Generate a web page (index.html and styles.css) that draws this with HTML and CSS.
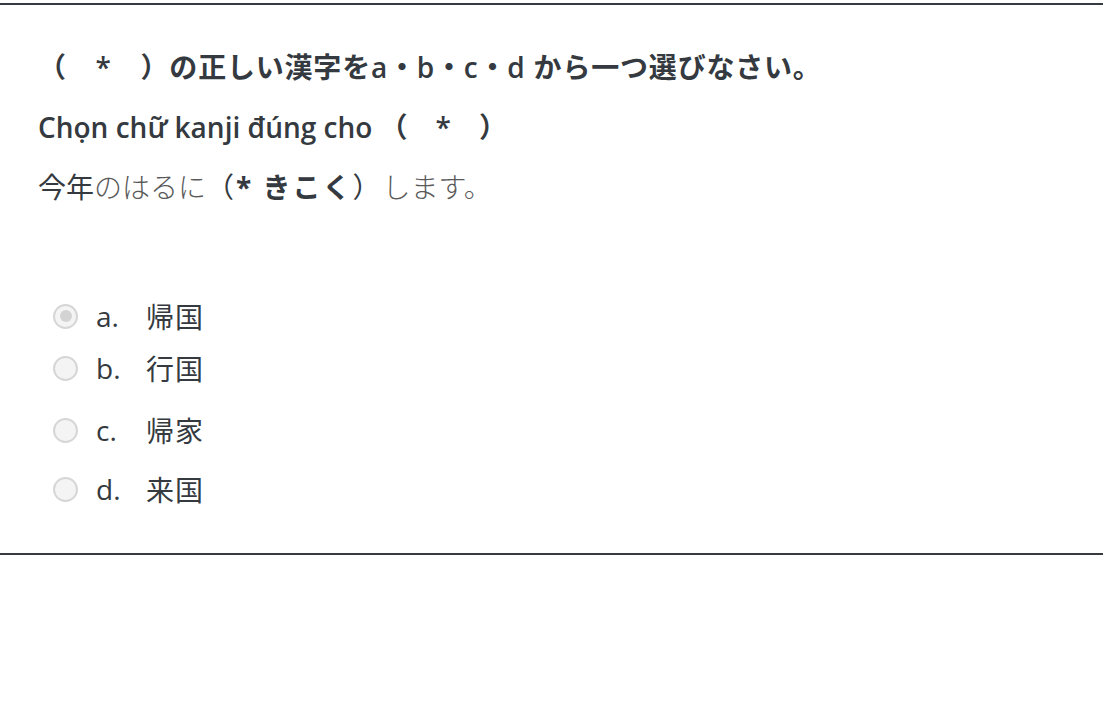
FILE: index.html
```html
<!DOCTYPE html>
<html lang="ja">
<head>
<meta charset="utf-8">
<link rel="stylesheet" href="styles.css">
</head>
<body>
<div class="question">
  <p class="title">（　*　）の正しい漢字をa・b・c・d から一つ選びなさい。</p>
  <p class="subtitle">Chọn chữ kanji đúng cho （　*　）</p>
  <p class="sentence"><span class="kanji">今年</span><span class="light">のはるに</span><span class="paren">（<b>* きこく</b>）</span><span class="light">します。</span></p>
  <ul class="answers">
    <li class="answer a1"><span class="radio checked"></span><span class="letter">a.</span><span class="ans">帰国</span></li>
    <li class="answer a2"><span class="radio"></span><span class="letter">b.</span><span class="ans">行国</span></li>
    <li class="answer a3"><span class="radio"></span><span class="letter">c.</span><span class="ans">帰家</span></li>
    <li class="answer a4"><span class="radio"></span><span class="letter">d.</span><span class="ans">来国</span></li>
  </ul>
</div>
</body>
</html>
```
FILE: styles.css
```css
html, body {
  margin: 0;
  padding: 0;
  background: #fff;
}
body {
  font-family: "Open Sans", "Noto Sans CJK JP", sans-serif;
  color: #343a40;
  padding-top: 3px;
}
.question {
  border-top: 2px solid #343a40;
  border-bottom: 2px solid #343a40;
  padding: 36px 38px 30px;
  height: 552px;
  box-sizing: border-box;
}
p {
  margin: 0;
}
.title {
  font-size: 28px;
  font-weight: 600;
  letter-spacing: 0.8px;
  line-height: 60px;
  height: 60px;
  margin-top: -4px;
}
.subtitle {
  font-size: 28px;
  font-weight: 600;
  line-height: 60px;
  height: 60px;
}
.sentence {
  font-size: 28px;
  line-height: 60px;
  height: 60px;
}
.kanji {
  color: #343a40;
}
.light {
  color: #5a5a5a;
  font-weight: 300;
}
.paren {
  color: #343a40;
  letter-spacing: 2px;
}
.sentence b {
  font-weight: 700;
}
.answers {
  list-style: none;
  margin: 0;
  padding: 0;
  margin-top: 75px;
}
.answer {
  display: flex;
  align-items: center;
  font-size: 28px;
  color: #343a40;
  height: 48px;
}
.a2 {
  height: 56px;
}
.a3 {
  height: 52px;
  margin-top: 8px;
}
.a4 {
  height: 52px;
  margin-top: 7px;
}
.radio {
  flex: none;
  width: 21px;
  height: 21px;
  border: 2px solid #d6d6d6;
  border-radius: 50%;
  background: #f4f4f4;
  margin-left: 15px;
  margin-right: 18px;
  display: flex;
  align-items: center;
  justify-content: center;
}
.radio.checked::after {
  content: "";
  width: 12px;
  height: 12px;
  border-radius: 50%;
  background: #d3d3d3;
}
.letter {
  width: 50px;
}
.ans {
  letter-spacing: 1px;
}
```
